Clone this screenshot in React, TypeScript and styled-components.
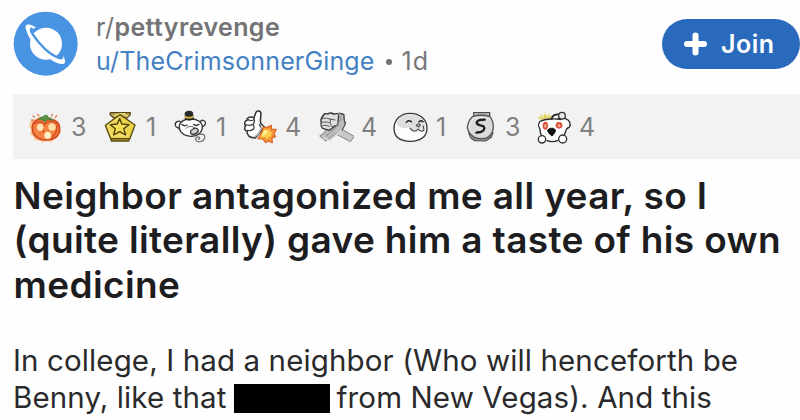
import React from "react";
import type { ReactNode } from "react";
import styled, { createGlobalStyle } from "styled-components";

const GlobalStyle = createGlobalStyle`
  * { box-sizing: border-box; }
  body { margin: 0; background: #fefefe; }
`;

const Post = styled.article`
  width: 800px;
  height: 420px;
  overflow: hidden;
  padding-left: 13px;
  background: #fefefe;
  font-family: Inter, "Liberation Sans", sans-serif;
`;

const Header = styled.header`
  display: flex;
  height: 94px;
  align-items: flex-start;
`;

const Avatar = styled.svg`
  flex: none;
  width: 65px;
  height: 65px;
  margin-top: 11px;
`;

const Byline = styled.div`
  flex: 1;
  margin: 10px 0 0 18px;
  white-space: nowrap;
`;

const Community = styled.div`
  height: 34px;
  line-height: 34px;
  font-size: 25px;
  letter-spacing: 0.4px;
  color: #737375;
`;

const CommunityName = styled.span`
  font-weight: 600;
`;

const Meta = styled.div`
  display: flex;
  align-items: center;
  height: 34px;
  line-height: 34px;
  font-size: 25px;
  letter-spacing: 0.15px;
  color: #77787a;
`;

const Author = styled.span`
  color: #4481c3;
`;

const Dot = styled.span`
  width: 6px;
  height: 6px;
  margin: 2px 10px 0 11px;
  border-radius: 50%;
  background: #707173;
`;

const Age = styled.span`
  letter-spacing: 1px;
`;

const JoinButton = styled.button`
  display: flex;
  flex: none;
  align-items: center;
  gap: 14px;
  width: 138px;
  height: 50px;
  margin-top: 19px;
  padding: 0 0 0 22px;
  border: 0;
  border-radius: 25px;
  background: #296abc;
  color: #fff;
  font: 600 25px/50px Inter, "Liberation Sans", sans-serif;
  letter-spacing: 0.5px;
`;

const PlusIcon = styled.svg`
  width: 23px;
  height: 24px;
`;

const AwardBar = styled.div`
  display: grid;
  grid-template-columns: 75px 71px 69px 76px 75px 70px 73px 64px;
  align-items: center;
  height: 65px;
  padding-left: 14px;
  background: #f2f2f2;
`;

const Award = styled.div<{ $gap: number }>`
  display: flex;
  align-items: center;
  gap: ${(p) => p.$gap}px;
  color: #808080;
  font-size: 25px;
  line-height: 36px;
`;

const AwardIcon = styled.svg`
  flex: none;
  width: 36px;
  height: 36px;
  fill: none;
  stroke-linecap: round;
  stroke-linejoin: round;
`;

const Title = styled.h1`
  margin: 15px 0 0;
  padding-left: 0.6px;
  color: #1d1d1f;
  font-size: 37px;
  font-weight: 600;
  line-height: 44.3px;
  letter-spacing: 0.36px;
  white-space: nowrap;
`;

const Line = styled.span`
  display: block;
`;

const Body = styled.p`
  margin: 35px 0 0;
  color: #2a2a2c;
  font-size: 29.5px;
  line-height: 37px;
  letter-spacing: 0.12px;
  white-space: nowrap;
`;

const Redacted = styled.span`
  display: inline-block;
  width: 96px;
  height: 29px;
  margin: 0 7px 0 7px;
  vertical-align: -5px;
  background: #000;
`;

type AwardData = { name: string; count: number; gap: number; viewBox: string; art: ReactNode };

const awards: AwardData[] = [
  {
    name: "tomato",
    count: 3,
    gap: 8,
    viewBox: "81 54 108 108",
    art: (
      <>
        <path d="M90 92l6-8 12 0 8-8 14 3 14-4 8 8 12 0 4 12 12 8-2 12 6 10-9 6-2 10-11 4-8 8-12-2-14 3-12-6-12 0-4-11-10-8 4-12-6-10z" fill="#f9c78f" />
        <path d="M136 89c-15-9-38-3-39 19-1 25 16 39 41 39 26 0 42-13 41-36-1-21-24-31-43-22z" fill="#f58243" stroke="#d14a20" strokeWidth="5" />
        <path d="M103 98c10-7 20-8 31 1 11-10 27-9 36 0M134 99c-5 9-7 17-4 25M171 104c1 14-3 25-14 34" stroke="#d8481f" strokeWidth="4" />
        <ellipse cx="121" cy="109" rx="10" ry="11" fill="#ffe4b5" />
        <ellipse cx="156" cy="108" rx="11" ry="11" fill="#ffdfa9" />
        <ellipse cx="143" cy="133" rx="10" ry="11" fill="#ffefc5" />
        <path d="M117 83c6-7 14-4 16-10 4 0 9-1 10 1l-1 6c9-1 15 3 17 8-10 0-13-3-19-2l-5 8-5-7c-6 1-9 1-13-4z" fill="#5c9446" stroke="#3f783b" strokeWidth="2" />
        <path d="M99 75l4 3M113 70l3 4M157 70l-2 5M170 74l-4 5M95 87l3 2" stroke="#dc7446" strokeWidth="4" />
      </>
    ),
  },
  {
    name: "gold medal",
    count: 1,
    gap: 8,
    viewBox: "306 54 108 108",
    art: (
      <>
        <path d="M331 65h60v6l-10 10h-40l-11-10z" fill="#b89f4b" stroke="#52461b" strokeWidth="3.5" />
        <path d="M342 74l19-6 22 7M347 71l28-3" stroke="#ead77c" strokeWidth="4" />
        <path d="M331 137l3 13h52l5-13" fill="#aa8a2e" stroke="#5e4c17" strokeWidth="4" />
        <path d="M360 71l45 31-15 40-58 1-16-40z" fill="#ecd44c" stroke="#574912" strokeWidth="4" />
        <path d="M360 78l-36 26 12 31 49-1" stroke="#fae789" strokeWidth="3" />
        <path d="M359 82l6 17 22 2-16 12 6 19-18-10-18 10 5-19-15-12 21-2z" fill="#f4dd54" stroke="#4a3f0d" strokeWidth="4" />
      </>
    ),
  },
  {
    name: "sleepy bear",
    count: 1,
    gap: 7,
    viewBox: "39 54 108 108",
    art: (
      <>
        <path d="M63 94c-7-8-19 0-17 8 1 7 8 10 13 8M121 92c5-8 16-3 15 5-1 8-7 10-12 9" fill="#fff" stroke="#333" strokeWidth="4" />
        <path d="M91 84c-18 0-29 7-33 19-4 13 7 27 23 31 25 7 46-7 46-26 0-15-16-25-36-24z" fill="#fff" stroke="#333" strokeWidth="4" />
        <path d="M76 85l-1-20c7-6 18-6 23-1l2 20c-8 5-17 5-24 1z" fill="#292929" stroke="#222" strokeWidth="2" />
        <path d="M76 77c7 4 15 4 22 0" stroke="#dfbd38" strokeWidth="5" />
        <path d="M66 100l7 5 8-3M101 100l8 4 8-4" stroke="#333" strokeWidth="4" />
        <path d="M78 112c4-7 19-8 26-1" stroke="#555" strokeWidth="3" />
        <ellipse cx="103" cy="121" rx="12" ry="8" transform="rotate(-28 103 121)" fill="#d2d2d2" stroke="#333" strokeWidth="4" />
        <path d="M119 130c11-3 17 3 15 11-3 11-19 15-26 7-5-7 3-11 8-10 5 2 3 7-1 7" stroke="#666" strokeWidth="3.5" />
      </>
    ),
  },
  {
    name: "rocket like",
    count: 4,
    gap: 7,
    viewBox: "246 54 108 108",
    art: (
      <>
        <path d="M262 83c5-8 13-5 20-3l6-16c3-7 15-5 15 4l-2 22c-1 9 7 12 12 18l-27 33c-18 0-25-8-25-20-8-3-9-11-4-16-6-7-2-16 5-18z" fill="#fff" stroke="#303030" strokeWidth="4.5" />
        <path d="M261 84c7 6 13 6 19 3M257 101c8 3 15 3 21-1M261 118c7 2 14 1 19-4M281 81c4 7 3 13-2 19 4 6 4 11 1 15M298 100c2 6 4 10 9 14" stroke="#444" strokeWidth="4" />
        <path d="M283 137c9-4 17-15 21-27" stroke="#b9b9b9" strokeWidth="5" />
        <path d="M310 108c9 3 17 0 24-5l0 12 15 0-7 14 5 8-11 3 1 15-13-5-7 5-9-11-14-1c7-10 13-20 16-35z" fill="#f4953a" stroke="#dc6425" strokeWidth="3.5" />
        <path d="M312 114c8 3 12 3 18 0l-1 9 9 0-6 8 4 5-10 1-2 8-9-7-14 2z" fill="#ffd04b" />
        <path d="M313 118l9 3-4 9-12 5z" fill="#fff3a0" />
      </>
    ),
  },
  {
    name: "arm wrestle",
    count: 4,
    gap: 7,
    viewBox: "24 54 108 108",
    art: (
      <>
        <path d="M70 124l18-14 44 26-10 15z" fill="#c8c8c8" stroke="#858585" strokeWidth="3" />
        <path d="M35 78l8-11 15 2 9-3 9 5 8-5 15 2 3 18 5 10-12 20-48 34-18-15 16-12 5-12-13-5z" fill="#bcbcbc" stroke="#808080" strokeWidth="3" />
        <path d="M38 112c-5-4-6-13-4-18-3-6 0-13 4-17 3-8 10-10 16-8 6-5 12-3 17 1 7-4 14-2 15 2l-3 30-12 6-13 10z" fill="#dfdfdf" stroke="#383838" strokeWidth="4" />
        <path d="M36 84c6-4 15-3 23 0l16 3M36 94c8-2 15-1 22 1M38 104c7-2 14-1 20 2M61 84c-1 10 0 17 5 23l13-4" stroke="#555" strokeWidth="3" />
        <path d="M82 70c8 1 11 9 11 17-8 6-13 15-17 24l-27 24" stroke="#888" strokeWidth="3" />
        <path d="M41 140l18 8 36-31 10-17" stroke="#d8d8d8" strokeWidth="5" />
        <path d="M91 67l11 4 1 18 3 10-10 19" stroke="#444" strokeWidth="3.5" />
      </>
    ),
  },
  {
    name: "wholesome",
    count: 1,
    gap: 7,
    viewBox: "249 54 108 108",
    art: (
      <>
        <path d="M300 67c-27 0-48 18-48 45 0 29 22 39 50 39s49-13 49-39c0-27-21-45-51-45z" fill="#fdfdfd" stroke="#353535" strokeWidth="4" />
        <path d="M258 95c9-19 25-25 43-25 25 0 41 13 46 31-3 14-12 19-23 13-12 10-26 5-28-4-17 3-33-1-38-15z" fill="#dedede" />
        <path d="M289 94c4-6 10-6 15-2M327 93c3-5 8-5 12-1" stroke="#222" strokeWidth="4.5" />
        <path d="M301 112c5 10 18 11 24 2 3 7 11 8 17 3l-2-12M319 103c3-5 10-5 12-1l-5 6z" stroke="#444" strokeWidth="3.5" />
      </>
    ),
  },
  {
    name: "silver",
    count: 3,
    gap: 6,
    viewBox: "39 54 108 108",
    art: (
      <>
        <path d="M71 65h48v10H72z" fill="#d6d6d6" stroke="#4b4b4b" strokeWidth="4" />
        <path d="M75 74l15-6 24 5" stroke="#999" strokeWidth="3" />
        <path d="M56 126l6 14 12 9 33 1 17-11 5-14-70 3z" fill="#929292" stroke="#555" strokeWidth="3.5" />
        <path d="M67 77c19-6 37-5 53 0 7 8 10 20 10 32 0 14-9 25-18 31-11 4-25 4-38-1-11-6-20-16-22-29 1-14 6-24 15-33z" fill="#dadada" stroke="#555" strokeWidth="4" />
        <path d="M69 82c-9 10-13 26-7 37M72 83c14-5 29-4 43-1" stroke="#f0f0f0" strokeWidth="3" />
        <path d="M104 86l-15 1c-11 4-12 12-1 15l13 4c5 7 0 15-9 17l-13 2" stroke="#1c1c1c" strokeWidth="7" />
      </>
    ),
  },
  {
    name: "shocked",
    count: 4,
    gap: 7,
    viewBox: "258 54 108 108",
    art: (
      <>
        <path d="M269 86l-7-10 10 3-1-11 10 7 3-11 6 10 9-8 0 10 12-5-4 11-17 5z" fill="#eadc83" />
        <path d="M271 80l7 5M285 73l1 9M299 76l-5 7" stroke="#d4be4f" strokeWidth="3" />
        <path d="M318 88c10-9 27-8 36-1 9 8 9 22-2 25" fill="#fff" stroke="#292929" strokeWidth="4" />
        <path d="M270 91c16-7 46-9 62-5 16 5 19 16 16 29-3 21-17 33-39 33-24 0-38-13-38-33-7-7-6-18-1-24z" fill="#fff" />
        <path d="M332 86c-16-5-46-2-62 5-5 6-6 16 0 23 0 13 3 20 10 25M353 111c-6 4-6 13-10 21M291 149c10 4 24 3 33-1" stroke="#292929" strokeWidth="4" />
        <path d="M305 84c1-11 10-14 21-14" stroke="#222" strokeWidth="5" />
        <circle cx="336" cy="74" r="10" fill="#ededed" stroke="#333" strokeWidth="4" />
        <ellipse cx="286" cy="104" rx="8" ry="12" fill="#d9523b" />
        <ellipse cx="327" cy="103" rx="10" ry="10" fill="#d9523b" />
        <ellipse cx="286" cy="105" rx="3.5" ry="5" fill="#f4b09c" />
        <ellipse cx="327" cy="104" rx="4" ry="4" fill="#f4b09c" />
        <path d="M293 118c3-8 19-9 23-1 1 7-4 11-10 18-6-4-12-10-13-17z" fill="#111" stroke="#111" strokeWidth="3" />
        <circle cx="276" cy="145" r="11" fill="#fff" stroke="#333" strokeWidth="4" />
        <circle cx="338" cy="144" r="12" fill="#fff" stroke="#333" strokeWidth="4" />
      </>
    ),
  },
];

const App = () => (
  <>
    <GlobalStyle />
    <Post>
      <Header>
        <Avatar viewBox="39 33 195 195" fill="none">
          <circle cx="137" cy="131" r="96" fill="#4894e2" />
          <circle cx="138" cy="131" r="48" fill="#fff" />
          <path
            d="M108 83C90 70 72 69 78 88C85 116 99 128 116 147C140 172 164 190 184 192C201 193 197 180 186 158C186 166 190 173 182 173C166 170 128 140 112 118C101 103 91 88 99 86Z"
            fill="#fff"
          />
          <path
            d="M95 86C90 87 94 96 99 104C116 132 150 164 175 173C188 178 190 171 184 160"
            stroke="#4894e2"
            strokeWidth="7"
            strokeLinecap="round"
          />
        </Avatar>
        <Byline>
          <Community>
            r/<CommunityName>pettyrevenge</CommunityName>
          </Community>
          <Meta>
            <Author>u/TheCrimsonnerGinge</Author>
            <Dot />
            <Age>1d</Age>
          </Meta>
        </Byline>
        <JoinButton>
          <PlusIcon viewBox="0 0 23 24" fill="none">
            <path d="M11.5 3.5v17M3 12h17" stroke="#fff" strokeWidth="6" strokeLinecap="round" />
          </PlusIcon>
          Join
        </JoinButton>
      </Header>
      <AwardBar>
        {awards.map((award) => (
          <Award key={award.name} $gap={award.gap}>
            <AwardIcon viewBox={award.viewBox}>{award.art}</AwardIcon>
            {award.count}
          </Award>
        ))}
      </AwardBar>
      <Title>
        <Line>Neighbor antagonized me all year, so I</Line>
        <Line>(quite literally) gave him a taste of his own</Line>
        <Line>medicine</Line>
      </Title>
      <Body>
        <Line>In college, I had a neighbor (Who will henceforth be</Line>
        <Line>
          Benny, like that
          <Redacted />
          from New Vegas). And this
        </Line>
      </Body>
    </Post>
  </>
);

export default App;
